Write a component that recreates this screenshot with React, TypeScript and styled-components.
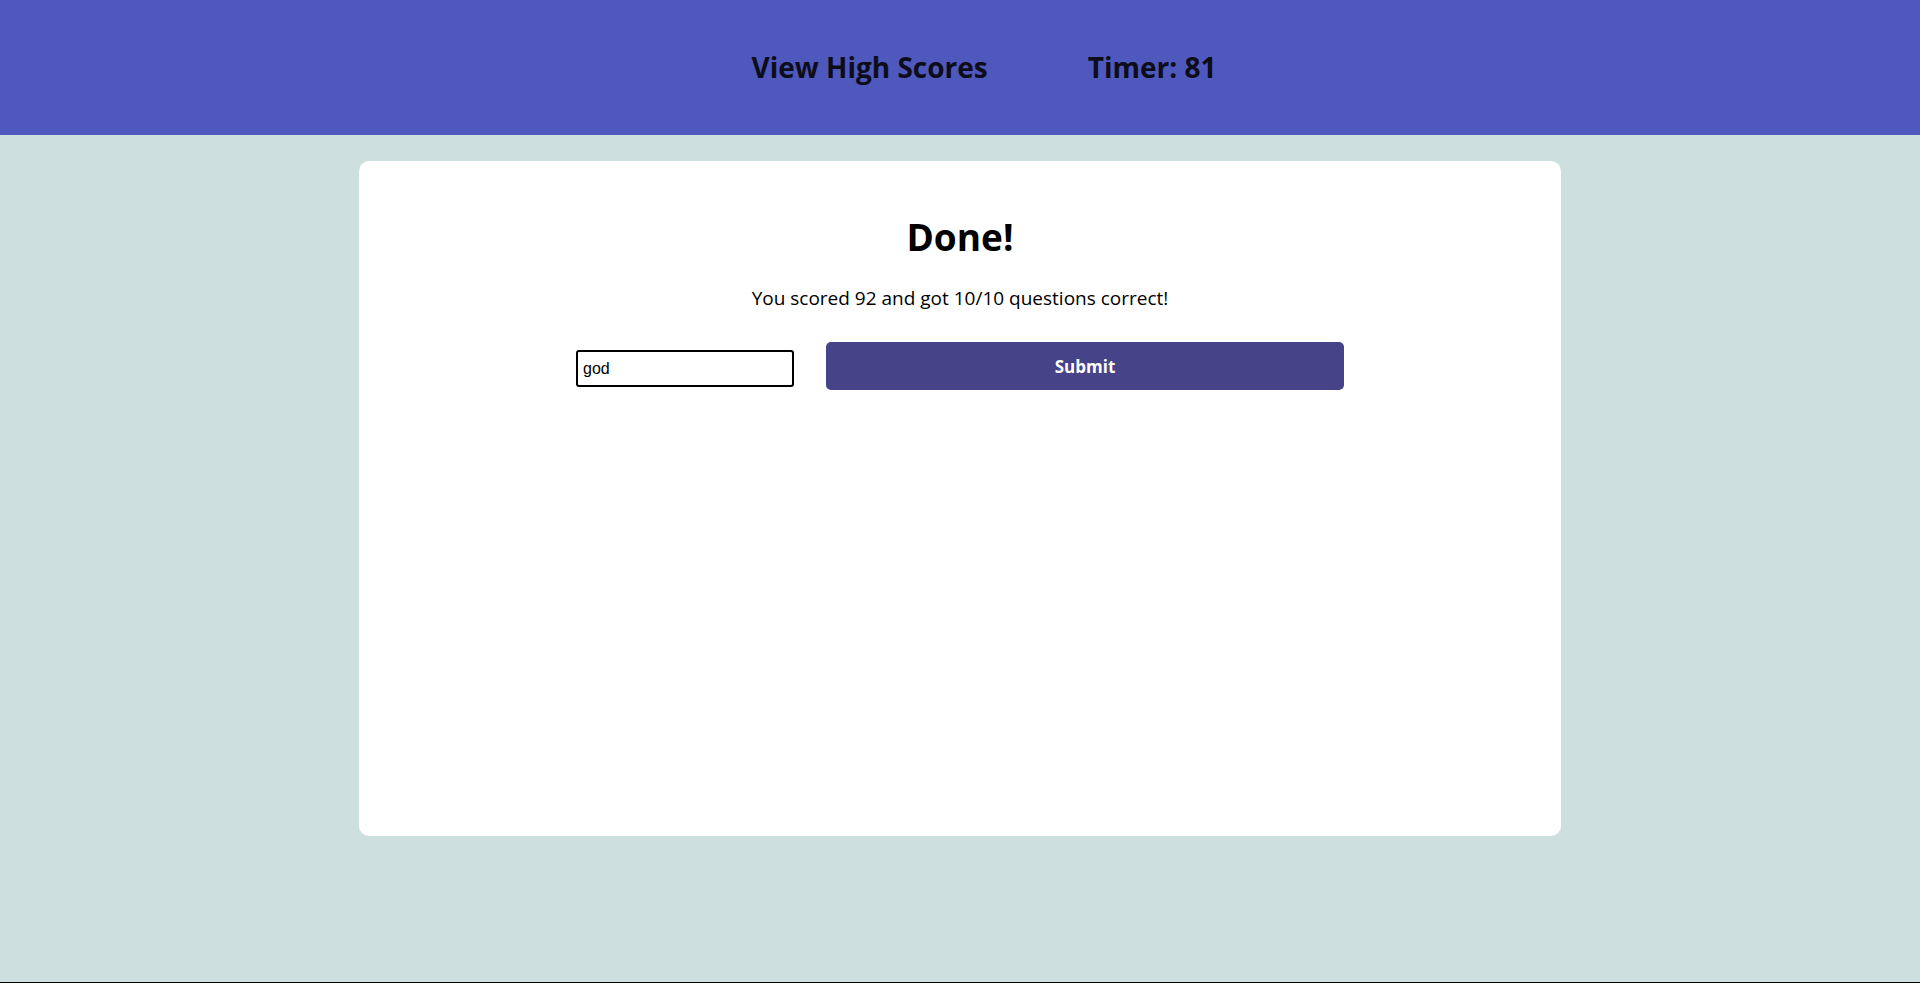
import * as React from "react";
import styled, { createGlobalStyle } from "styled-components";

const colors = {
  header: "#4f58bd",
  page: "#cddfdf",
  card: "#ffffff",
  button: "#474389",
  text: "#000000"
};

const GlobalStyle = createGlobalStyle`
  html, body {
    margin: 0;
    padding: 0;
  }
  body {
    font-family: "Open Sans", "DejaVu Sans", sans-serif;
    color: ${colors.text};
    background: ${colors.page};
  }
`;

const Page = styled.div`
  min-height: 100vh;
  box-sizing: border-box;
  border-bottom: 1px solid #000;
  background: ${colors.page};
`;

const Header = styled.header`
  height: 135px;
  background: ${colors.header};
  display: flex;
  align-items: center;
  justify-content: center;
  gap: 100px;
  padding-left: 48px;
  padding-bottom: 1px;
  box-sizing: border-box;
`;

const NavItem = styled.a`
  font-size: 28px;
  font-weight: 700;
  color: #0d0d1a;
  text-decoration: none;
  cursor: pointer;
  line-height: 1;
`;

const Main = styled.main`
  display: flex;
  justify-content: center;
  padding-top: 26px;
`;

const Card = styled.section`
  width: 1202px;
  height: 675px;
  background: ${colors.card};
  border-radius: 10px;
  display: flex;
  flex-direction: column;
  align-items: center;
`;

const Title = styled.h1`
  font-size: 37px;
  font-weight: 700;
  line-height: 1;
  margin: 57px 0 0;
`;

const Summary = styled.p`
  font-size: 19px;
  line-height: 1;
  margin: 34px 0 0;
`;

const Form = styled.form`
  display: flex;
  align-items: flex-start;
  gap: 32px;
  margin-top: 34px;
`;

const NameInput = styled.input`
  width: 218px;
  height: 37px;
  box-sizing: border-box;
  margin-top: 8px;
  padding: 0 5px;
  border: 2px solid #000;
  border-radius: 3px;
  outline: none;
  font-family: "Liberation Sans", Arial, sans-serif;
  font-size: 16px;
  color: #000;
  caret-color: #000;
`;

const SubmitButton = styled.button`
  width: 518px;
  height: 48px;
  border: none;
  border-radius: 5px;
  background: ${colors.button};
  color: #fff;
  font-family: "Open Sans", "DejaVu Sans", sans-serif;
  font-size: 17px;
  font-weight: 700;
  cursor: pointer;
`;

export default function App() {
  const [name, setName] = React.useState("god");
  return (
    <Page>
      <GlobalStyle />
      <Header>
        <NavItem>View High Scores</NavItem>
        <NavItem>Timer: 81</NavItem>
      </Header>
      <Main>
        <Card>
          <Title>Done!</Title>
          <Summary>You scored 92 and got 10/10 questions correct!</Summary>
          <Form onSubmit={(e) => e.preventDefault()}>
            <NameInput
              autoFocus
              value={name}
              onChange={(e) => setName(e.target.value)}
            />
            <SubmitButton type="submit">Submit</SubmitButton>
          </Form>
        </Card>
      </Main>
    </Page>
  );
}
